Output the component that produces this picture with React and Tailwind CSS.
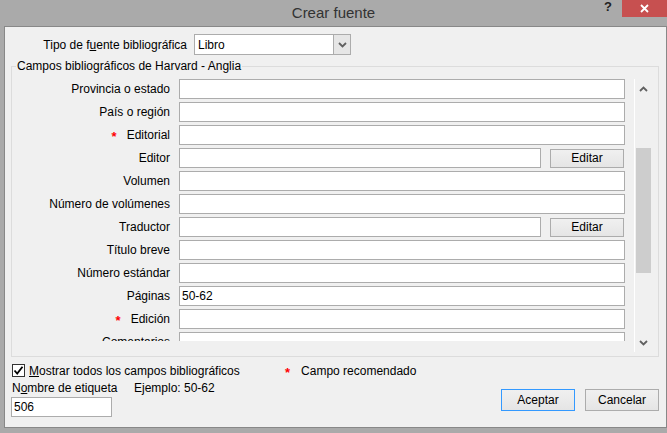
import React from "react";

const rows = [
  { label: "Provincia o estado" },
  { label: "País o región" },
  { label: "Editorial", req: true },
  { label: "Editor", btn: true },
  { label: "Volumen" },
  { label: "Número de volúmenes" },
  { label: "Traductor", btn: true },
  { label: "Título breve" },
  { label: "Número estándar" },
  { label: "Páginas", value: "50-62" },
  { label: "Edición", req: true },
  { label: "Comentarios" },
];

const Chevron = ({ up }) => (
  <svg width="9" height="6" viewBox="0 0 9 6">
    <path d={up ? "M1 5 L4.5 1.5 L8 5" : "M1 1 L4.5 4.5 L8 1"} fill="none" stroke="#606060" strokeWidth="1.8" />
  </svg>
);

const Star = ({ className = "" }) => (
  <span className={`text-[#ff0000] font-bold text-[13px] leading-none ${className}`}>*</span>
);

const WinButton = ({ children, className = "" }) => (
  <div className={`flex items-center justify-center border bg-gradient-to-b from-[#f0f0f0] to-[#e5e5e5] ${className}`}>
    {children}
  </div>
);

const FieldRow = ({ label, req, btn, value }) => (
  <div className="flex items-center h-[20px] mb-[3px] shrink-0">
    <div className="w-[158px] flex items-center justify-end">
      {req && <Star className="mr-[10px] mt-[3px]" />}
      <span>{label}</span>
    </div>
    <div
      className={`ml-[9px] h-[20px] bg-white border border-[#acacac] px-[2px] flex items-center ${btn ? "w-[362px]" : "w-[446px]"}`}
    >
      {value}
    </div>
    {btn && (
      <WinButton className="ml-[9px] w-[74px] h-[19px] border-[#acacac]">Editar</WinButton>
    )}
  </div>
);

export default function App() {
  return (
    <div className="w-[667px] h-[433px] bg-[#aaaaaa] overflow-hidden font-['Liberation_Sans',Arial,sans-serif] text-[12px] text-black">
      {/* title bar */}
      <div className="h-[26px] flex items-start">
        <div className="w-[67px]" />
        <div className="flex-1 text-center text-[15px] leading-[25px] text-[#333]">Crear fuente</div>
        <div className="w-[67px] flex items-start">
          <div className="w-[22px] pl-[4px] text-[13px] font-bold leading-[14px] text-[#222]">?</div>
          <div className="w-[45px] h-[17px] bg-[#c75050] flex items-center justify-center">
            <svg width="9" height="9" viewBox="0 0 9 9">
              <path d="M1 1 L8 8 M8 1 L1 8" stroke="#fff" strokeWidth="1.8" />
            </svg>
          </div>
        </div>
      </div>

      {/* dialog body */}
      <div className="ml-[4px] w-[663px] h-[402px] border border-[#888888] bg-[#f0f0f0] flex flex-col">
        <div className="flex items-center mt-[7px]">
          <div className="w-[182px] text-right">
            Tipo de f<u>u</u>ente bibliográfica
          </div>
          <div className="ml-[7px] w-[157px] h-[21px] bg-white border border-[#acacac] flex">
            <div className="flex-1 px-[3px] flex items-center">Libro</div>
            <div className="w-[17px] bg-[#e6e6e6] border-l border-[#acacac] flex items-center justify-center">
              <Chevron />
            </div>
          </div>
        </div>

        <fieldset className="mt-[3px] ml-[6px] w-[648px] border border-[#dcdcdc] pt-[5px] pb-[4px]">
          <legend className="ml-[4px] px-[1px] leading-[16px]">Campos bibliográficos de Harvard - Anglia</legend>
          <div className="flex items-start">
            <div className="w-[622px] h-[262px] overflow-hidden flex flex-col">
              {rows.map((r) => (
                <FieldRow key={r.label} {...r} />
              ))}
            </div>
            <div className="w-[17px] h-[273px] border-l border-white flex flex-col items-center">
              <div className="h-[20px] flex items-center justify-center">
                <Chevron up />
              </div>
              <div className="mt-[49px] w-[15px] h-[125px] bg-[#cdcdcd]" />
              <div className="flex-1" />
              <div className="h-[18px] flex items-center justify-center">
                <Chevron />
              </div>
            </div>
          </div>
        </fieldset>

        {/* bottom */}
        <div className="mt-[7px] ml-[7px] flex items-center h-[13px]">
          <div className="w-[13px] h-[13px] bg-white border border-[#333] flex items-center justify-center">
            <svg width="11" height="11" viewBox="0 0 11 11">
              <path d="M1.5 5.5 L4.2 8.5 L9.5 1.8" fill="none" stroke="#000" strokeWidth="1.8" />
            </svg>
          </div>
          <span className="ml-[4px] w-[256px]">
            <u>M</u>ostrar todos los campos bibliográficos
          </span>
          <Star className="mt-[3px]" />
          <span className="ml-[11px]">Campo recomendado</span>
        </div>

        <div className="flex justify-between">
          <div className="ml-[6px] flex flex-col">
            <div className="mt-[3px] h-[16px] flex items-center">
              <span className="w-[123px] pl-[1px]">
                N<u>o</u>mbre de etiqueta
              </span>
              <span>Ejemplo: 50-62</span>
            </div>
            <div className="mt-[1px] w-[101px] h-[20px] bg-white border border-[#acacac] px-[2px] flex items-center">506</div>
          </div>
          <div className="mt-[12px] mr-[7px] flex gap-[10px]">
            <WinButton className="w-[74px] h-[22px] border-[#3399ff]">Aceptar</WinButton>
            <WinButton className="w-[74px] h-[22px] border-[#acacac]">Cancelar</WinButton>
          </div>
        </div>
      </div>
    </div>
  );
}
